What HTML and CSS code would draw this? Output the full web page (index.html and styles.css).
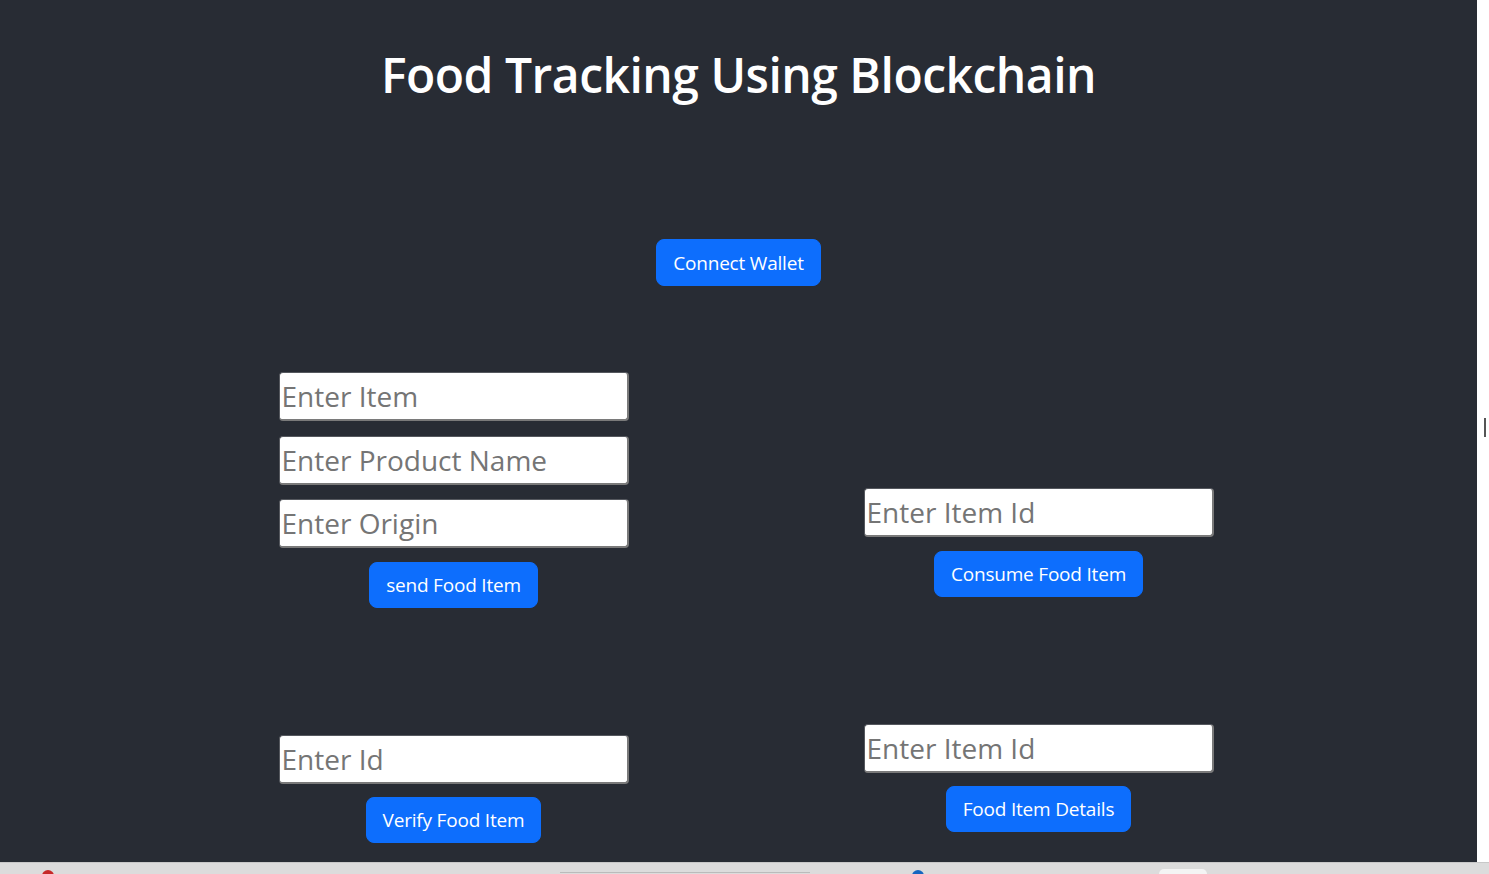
FILE: index.html
```html
<!DOCTYPE html>
<html lang="en">
<head>
<meta charset="utf-8">
<title>Food Tracking Using Blockchain</title>
<link rel="stylesheet" href="styles.css">
</head>
<body>
<div class="screen">
  <div class="window">
    <main class="app">
      <h1 class="title">Food Tracking Using Blockchain</h1>
      <div class="wallet">
        <button class="btn">Connect Wallet</button>
      </div>
      <div class="grid">
        <div class="cell">
          <input class="field" type="text" placeholder="Enter Item">
          <input class="field" type="text" placeholder="Enter Product Name">
          <input class="field" type="text" placeholder="Enter Origin">
          <button class="btn">send Food Item</button>
        </div>
        <div class="cell cell-right">
          <input class="field" type="text" placeholder="Enter Item Id">
          <button class="btn">Consume Food Item</button>
        </div>
        <div class="cell">
          <input class="field" type="text" placeholder="Enter Id">
          <button class="btn">Verify Food Item</button>
        </div>
        <div class="cell cell-right">
          <input class="field" type="text" placeholder="Enter Item Id">
          <button class="btn">Food Item Details</button>
        </div>
      </div>
    </main>
    <div class="edge"><span class="thumb"></span></div>
  </div>
  <div class="taskbar">
    <span class="tb-icon tb-red"></span>
    <span class="tb-line"></span>
    <span class="tb-icon tb-blue"></span>
    <span class="tb-pill"></span>
  </div>
</div>
</body>
</html>
```
FILE: styles.css
```css
* { box-sizing: border-box; }
html, body { margin: 0; padding: 0; }
body {
  width: 1489px;
  height: 874px;
  overflow: hidden;
  font-family: "Open Sans", "Noto Sans", "Liberation Sans", sans-serif;
  background: #d9d9d9;
}
.screen {
  display: flex;
  flex-direction: column;
  height: 874px;
}
.window {
  display: flex;
  height: 862px;
}
.app {
  width: 1477px;
  height: 862px;
  background: #282c34;
  color: #fff;
  display: flex;
  flex-direction: column;
}
.edge {
  width: 12px;
  background: #fff;
  padding-top: 418px;
  padding-left: 7px;
}
.thumb {
  display: block;
  width: 2px;
  height: 19px;
  background: #555;
}
.title {
  margin: 40px 0 0;
  font-size: 48px;
  font-weight: 600;
  line-height: 70px;
  text-align: center;
  letter-spacing: -0.5px;
}
.wallet {
  display: flex;
  justify-content: center;
  margin-top: 129px;
}
.btn {
  font-family: inherit;
  font-size: 19px;
  letter-spacing: -0.2px;
  line-height: 30px;
  padding: 7px 16px;
  color: #fff;
  background: #0d6efd;
  border: 1px solid #0d6efd;
  border-radius: 8px;
  cursor: pointer;
}
.wallet .btn { padding: 7.5px 16px; }
.grid {
  display: grid;
  grid-template-columns: 585px 585px;
  margin-left: 161px;
  margin-top: 86px;
  row-gap: 116px;
  align-items: end;
}
.cell {
  display: flex;
  flex-direction: column;
  align-items: center;
  gap: 14.5px;
}
.cell .btn { margin-top: -1px; }
.cell-right { padding-bottom: 11px; }
.field {
  width: 350px;
  height: 49px;
  font-family: inherit;
  font-size: 28px;
  padding: 0 2px;
  background: #fff;
  color: #222;
  border-style: solid;
  border-width: 1px 2px 2px 1px;
  border-color: #55585e #7a7a7a #7a7a7a #55585e;
  border-radius: 4px;
}
.field::placeholder { color: #757575; }
.taskbar {
  height: 12px;
  background: #dcdcdc;
  border-top: 1px solid #c8c8c8;
  position: relative;
}
.tb-icon {
  position: absolute;
  top: 7px;
  width: 12px;
  height: 12px;
  border-radius: 50%;
}
.tb-red { left: 42px; background: #c62828; }
.tb-blue { left: 912px; background: #1565c0; }
.tb-line {
  position: absolute;
  left: 560px;
  top: 9px;
  width: 250px;
  height: 1px;
  background: #bbb;
}
.tb-pill {
  position: absolute;
  left: 1159px;
  top: 6px;
  width: 48px;
  height: 10px;
  background: #f4f4f4;
  border-radius: 5px 5px 0 0;
}
```
